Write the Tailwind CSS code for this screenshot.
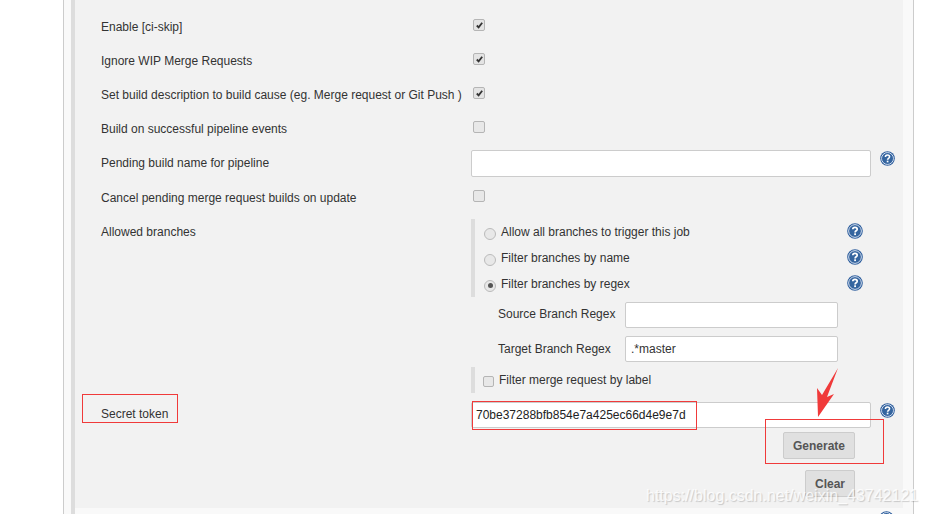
<!DOCTYPE html>
<html lang="en">
  <head>
    <meta charset="UTF-8" />
    <title>Jenkins GitLab trigger</title>
    <script src="https://cdn.jsdelivr.net/npm/@tailwindcss/browser@4"></script>
  </head>
  <body class="bg-white font-['Liberation_Sans',Arial,sans-serif] text-[12px] text-[#333] overflow-hidden">
    <svg class="hidden">
      <symbol id="help" viewBox="0 0 16 16">
        <circle cx="8" cy="8" r="7.8" fill="#2f5f9e" />
        <circle cx="8" cy="8" r="6.3" fill="none" stroke="#dfe8f3" stroke-width="1" />
        <circle cx="8" cy="8" r="5.4" fill="#35659f" />
        <path d="M5.8 6.3c0-1.3 1-2 2.2-2s2.2.8 2.2 1.9c0 1.6-2.1 1.6-2.1 3.2" fill="none" stroke="#fff" stroke-width="1.7" />
        <rect x="7.2" y="10.3" width="1.8" height="1.8" fill="#fff" />
      </symbol>
    </svg>

    <div class="relative h-[514px] w-[925px] overflow-hidden">
      <!-- Outer frame -->
      <div class="ml-[63px] h-[514px] w-[851px] border-x border-[#ccc] bg-[#f9f9f9] pl-[7px] pr-[10px]">
        <div class="h-[514px] border-l-4 border-[#ddd]">
          <div class="h-[508px] bg-[#f2f2f2] pl-[26px] pt-[10px]">
            <!-- Checkbox rows -->
            <div class="flex h-[34px] items-center">
              <span class="w-[370px]">Enable [ci-skip]</span>
              <span class="ml-[2px] flex size-[12px] -translate-y-[2px] items-center justify-center rounded-[2px] border border-[#b5b5b5] bg-[#e4e4e4]">
                <svg viewBox="0 0 10 10" class="size-[9px]"><path d="M2 5l2 2 4-5" fill="none" stroke="#333" stroke-width="2" /></svg>
              </span>
            </div>
            <div class="flex h-[34px] items-center">
              <span class="w-[370px]">Ignore WIP Merge Requests</span>
              <span class="ml-[2px] flex size-[12px] -translate-y-[2px] items-center justify-center rounded-[2px] border border-[#b5b5b5] bg-[#e4e4e4]">
                <svg viewBox="0 0 10 10" class="size-[9px]"><path d="M2 5l2 2 4-5" fill="none" stroke="#333" stroke-width="2" /></svg>
              </span>
            </div>
            <div class="flex h-[34px] items-center">
              <span class="w-[370px]">Set build description to build cause (eg. Merge request or Git Push )</span>
              <span class="ml-[2px] flex size-[12px] -translate-y-[2px] items-center justify-center rounded-[2px] border border-[#b5b5b5] bg-[#e4e4e4]">
                <svg viewBox="0 0 10 10" class="size-[9px]"><path d="M2 5l2 2 4-5" fill="none" stroke="#333" stroke-width="2" /></svg>
              </span>
            </div>
            <div class="flex h-[34px] items-center">
              <span class="w-[370px]">Build on successful pipeline events</span>
              <span class="ml-[2px] size-[12px] -translate-y-[2px] rounded-[2px] border border-[#b5b5b5] bg-[#e8e8e8]"></span>
            </div>
            <div class="flex h-[35px] items-center">
              <span class="w-[370px] -translate-y-[1px]">Pending build name for pipeline</span>
              <div class="h-[27px] w-[400px] rounded-[2px] border border-[#ccc] bg-white"></div>
              <svg class="ml-[9px] size-[15px] -translate-y-[5px]"><use href="#help" /></svg>
            </div>
            <div class="flex h-[34px] items-center">
              <span class="w-[370px]">Cancel pending merge request builds on update</span>
              <span class="ml-[2px] size-[12px] -translate-y-[2px] rounded-[2px] border border-[#b5b5b5] bg-[#e8e8e8]"></span>
            </div>

            <!-- Allowed branches -->
            <div class="flex pt-[4px]">
              <span class="w-[370px] pt-[4px]">Allowed branches</span>
              <div class="w-[400px]">
                <div class="h-[78px] w-[393px] border-l-4 border-[#ddd] pl-[9px]">
                  <div class="flex h-[26px] items-center">
                    <span class="mt-[3px] size-[12px] rounded-full border border-[#bbb] bg-[#e8e8e8]"></span>
                    <span class="ml-[5px] flex-1">Allow all branches to trigger this job</span>
                    <svg class="mr-[1px] size-[16px] -translate-y-[1px]"><use href="#help" /></svg>
                  </div>
                  <div class="flex h-[26px] items-center">
                    <span class="mt-[3px] size-[12px] rounded-full border border-[#bbb] bg-[#e8e8e8]"></span>
                    <span class="ml-[5px] flex-1">Filter branches by name</span>
                    <svg class="mr-[1px] size-[16px] -translate-y-[1px]"><use href="#help" /></svg>
                  </div>
                  <div class="flex h-[26px] items-center">
                    <span class="mt-[3px] flex size-[12px] items-center justify-center rounded-full border border-[#bbb] bg-[#e8e8e8]">
                      <span class="size-[5px] rounded-full bg-[#555]"></span>
                    </span>
                    <span class="ml-[5px] flex-1">Filter branches by regex</span>
                    <svg class="mr-[1px] size-[16px] -translate-y-[1px]"><use href="#help" /></svg>
                  </div>
                </div>
                <div class="mt-[5px] flex h-[26px] items-center pl-[27px]">
                  <span class="w-[127px] -translate-y-[1px]">Source Branch Regex</span>
                  <div class="h-[26px] w-[213px] rounded-[2px] border border-[#ccc] bg-white"></div>
                </div>
                <div class="mt-[8px] flex h-[26px] items-center pl-[27px]">
                  <span class="w-[127px]">Target Branch Regex</span>
                  <div class="flex h-[26px] w-[213px] items-center rounded-[2px] border border-[#ccc] bg-white pl-[5px]">.*master</div>
                </div>
                <div class="mt-[5px] flex h-[26px] items-center border-l-4 border-[#ddd] pl-[8px]">
                  <span class="mt-[3px] size-[11px] rounded-[2px] border border-[#b5b5b5] bg-[#e8e8e8]"></span>
                  <span class="ml-[5px]">Filter merge request by label</span>
                </div>
              </div>
            </div>

            <!-- Secret token -->
            <div class="mt-[9px] flex h-[26px] items-center">
              <span class="w-[370px] -translate-y-[1px]">Secret token</span>
              <div class="flex h-[26px] w-[400px] items-center rounded-[2px] border border-[#ccc] bg-white pl-[4px] text-[#222]">70be37288bfb854e7a425ec66d4e9e7d</div>
              <svg class="ml-[9px] size-[15px] -translate-y-[5px]"><use href="#help" /></svg>
            </div>
            <div class="mt-[4px] flex w-[754px] flex-col items-end gap-[11px]">
              <button class="h-[27px] w-[72px] rounded-[2px] border border-[#ccc] bg-[#e0e0e0] font-bold text-[#555]">Generate</button>
              <button class="h-[27px] w-[50px] rounded-[2px] border border-[#ccc] bg-[#e0e0e0] font-bold text-[#555]">Clear</button>
            </div>
          </div>
          <!-- Next section peeking in under the panel -->
          <div class="flex justify-end overflow-hidden pr-[9px] pt-[3px]">
            <svg class="size-[15px] shrink-0"><use href="#help" /></svg>
          </div>
        </div>
      </div>

      <!-- Red annotations drawn over the screenshot -->
      <div class="absolute left-[82px] top-[394px] h-[29px] w-[96px] border border-[#f03a3a]"></div>
      <div class="absolute left-[472px] top-[401px] h-[29px] w-[225px] border border-[#f03a3a]"></div>
      <div class="absolute left-[765px] top-[419px] h-[45px] w-[119px] border border-[#f03a3a]"></div>
      <svg class="absolute left-[810px] top-[364px]" width="32" height="54" viewBox="0 0 32 54">
        <path d="M28 4L17 33 24 30 8 53 7 24 12 31z" fill="#f03a3a" />
      </svg>

      <!-- Watermark -->
      <div class="absolute left-[646px] top-[484px] text-[16px] text-white/80 [text-shadow:1px_1px_1px_rgba(0,0,0,0.18)]">https://blog.csdn.net/weixin_43742121</div>
    </div>
  </body>
</html>
